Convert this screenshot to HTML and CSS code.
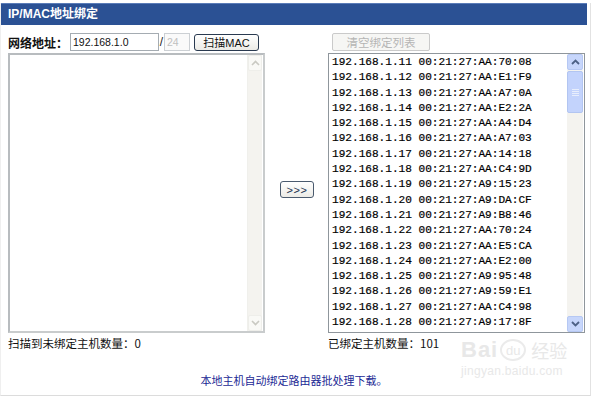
FILE: index.html
```html
<!DOCTYPE html>
<html lang="zh-CN">
<head>
<meta charset="utf-8">
<title>IP/MAC地址绑定</title>
<link rel="stylesheet" href="styles.css">
</head>
<body>
<div class="panel">
  <div class="titlebar">IP/MAC地址绑定</div>
  <div class="main">
    <div class="col">
      <div class="toolbar">
        <span class="label">网络地址：</span>
        <span class="input ip">192.168.1.0</span>
        <span class="slash">/</span>
        <span class="input mask">24</span>
        <span class="btn scan">扫描MAC</span>
      </div>
      <div class="listbox pale">
        <div class="items"></div>
        <div class="sb sb-off">
          <div class="sb-btn"><svg width="9" height="6" viewBox="0 0 9 6"><path d="M1 5 L4.5 1.5 L8 5" fill="none" stroke="#c9c9c2" stroke-width="1.6"/></svg></div>
          <div class="sb-track"></div>
          <div class="sb-btn"><svg width="9" height="6" viewBox="0 0 9 6"><path d="M1 1 L4.5 4.5 L8 1" fill="none" stroke="#c9c9c2" stroke-width="1.6"/></svg></div>
        </div>
      </div>
      <div class="count">扫描到未绑定主机数量：0</div>
    </div>
    <div class="mid"><span class="btn move">&gt;&gt;&gt;</span></div>
    <div class="col">
      <div class="toolbar"><span class="btn clear">清空绑定列表</span></div>
      <div class="listbox">
        <div class="items mono">
          <div>192.168.1.11 00:21:27:AA:70:08</div>
          <div>192.168.1.12 00:21:27:AA:E1:F9</div>
          <div>192.168.1.13 00:21:27:AA:A7:0A</div>
          <div>192.168.1.14 00:21:27:AA:E2:2A</div>
          <div>192.168.1.15 00:21:27:AA:A4:D4</div>
          <div>192.168.1.16 00:21:27:AA:A7:03</div>
          <div>192.168.1.17 00:21:27:AA:14:18</div>
          <div>192.168.1.18 00:21:27:AA:C4:9D</div>
          <div>192.168.1.19 00:21:27:A9:15:23</div>
          <div>192.168.1.20 00:21:27:A9:DA:CF</div>
          <div>192.168.1.21 00:21:27:A9:B8:46</div>
          <div>192.168.1.22 00:21:27:AA:70:24</div>
          <div>192.168.1.23 00:21:27:AA:E5:CA</div>
          <div>192.168.1.24 00:21:27:AA:E2:00</div>
          <div>192.168.1.25 00:21:27:A9:95:48</div>
          <div>192.168.1.26 00:21:27:A9:59:E1</div>
          <div>192.168.1.27 00:21:27:AA:C4:98</div>
          <div>192.168.1.28 00:21:27:A9:17:8F</div>
        </div>
        <div class="sb">
          <div class="sb-btn on"><svg width="9" height="6" viewBox="0 0 9 6"><path d="M1 5 L4.5 1.5 L8 5" fill="none" stroke="#4d6185" stroke-width="1.8"/></svg></div>
          <div class="sb-thumb"><span></span><span></span><span></span><span></span></div>
          <div class="sb-track"></div>
          <div class="sb-btn on"><svg width="9" height="6" viewBox="0 0 9 6"><path d="M1 1 L4.5 4.5 L8 1" fill="none" stroke="#4d6185" stroke-width="1.8"/></svg></div>
        </div>
      </div>
      <div class="count">已绑定主机数量：101</div>
    </div>
  </div>
  <div class="footer">本地主机自动绑定路由器批处理下载。</div>
  <div class="watermark">
    <div class="wm-top"><span class="wm-bai">Bai</span><span class="wm-du">du</span><span class="wm-jy">经验</span></div>
    <div class="wm-url">jingyan.baidu.com</div>
  </div>
</div>
</body>
</html>
```
FILE: styles.css
```css
* { box-sizing: border-box; }
html, body { margin: 0; padding: 0; background: #fff; }
body {
  font-family: "Liberation Sans", "Noto Sans CJK SC", sans-serif;
  font-size: 12px;
  color: #1a1a1a;
}
.panel {
  position: relative;
  width: 591px;
  height: 393px;
  margin-top: 3px;
  border-right: 1px solid #e2e2e2;
  border-bottom: 1px solid #dcdcdc;
  border-left: 1px solid #efefef;
  display: flex;
  flex-direction: column;
}
.titlebar {
  width: 586px;
  height: 22px;
  background: #2b5194;
  border-top: 1px solid #5a7cb8;
  color: #fff;
  font-weight: bold;
  font-size: 12px;
  line-height: 21px;
  padding-left: 7px;
  font-family: "Liberation Sans", "Noto Sans CJK SC", sans-serif;
}
.main {
  display: flex;
  padding: 8px 0 0 7px;
}
.col {
  width: 257px;
  display: flex;
  flex-direction: column;
}
.mid {
  width: 63px;
  display: flex;
  align-items: center;
  justify-content: center;
  padding-bottom: 4px;
  padding-left: 1px;
}
.toolbar {
  height: 18px;
  margin-bottom: 2px;
  display: flex;
  align-items: center;
}
.label {
  font-weight: bold;
  font-size: 12px;
  width: 62px;
  font-family: "Noto Sans CJK SC", sans-serif;
  color: #111;
}
.input {
  height: 18px;
  border: 1px solid #a5acb2;
  font-family: "Liberation Sans", sans-serif;
  font-size: 10.5px;
  line-height: 16px;
  padding-left: 2px;
  color: #111;
  background: #fff;
}
.ip { width: 89px; }
.slash { width: 5px; text-align: center; font-size: 12px; color: #222; }
.mask { width: 26px; color: #c0c0c0; border-color: #ccd0d4; background: #fafafa; }
.btn {
  display: inline-flex;
  align-items: center;
  justify-content: center;
  border: 1px solid #2a3a50;
  border-radius: 3px;
  background: linear-gradient(#ffffff, #ecebe6);
  font-size: 11px;
  color: #111;
  font-family: "Noto Sans CJK SC", sans-serif;
}
.scan {
  margin-left: 4px;
  width: 65px;
  height: 17px;
  font-family: "Liberation Sans", "Noto Sans CJK SC", sans-serif;
}
.move {
  width: 34px;
  height: 17px;
  border-color: #4a5a6e;
  font-family: "Liberation Sans", sans-serif;
  font-size: 11px;
  letter-spacing: 0.5px;
  color: #1e3050;
}
.clear {
  margin-left: 4px;
  width: 98px;
  height: 18px;
  border-color: #cacaca;
  border-radius: 2px;
  color: #b5b5b5;
  background: #f6f6f4;
  font-size: 11.5px;
}
.listbox {
  height: 280px;
  border: 1px solid #8f969c;
  display: flex;
  background: #fff;
}
.listbox.pale { border: 2px solid #b8bcbf; border-right-color: #c9cccd; border-bottom-color: #c9cccd; }
.items {
  flex: 1;
  overflow: hidden;
}
.mono {
  font-family: "Liberation Mono", monospace;
  font-size: 11.1px;
  line-height: 15.3px;
  padding: 1px 0 0 3px;
  color: #000;
  -webkit-text-stroke: 0.2px #000;
}
.sb {
  width: 16px;
  margin: 0 1px 0 0;
  display: flex;
  flex-direction: column;
  background: #f4f3ef;
}
.sb-btn {
  height: 16px;
  display: flex;
  align-items: center;
  justify-content: center;
  border: 1px solid #eeeeea;
  border-radius: 2px;
  background: #f9f9f6;
}
.sb-btn.on {
  background: #c7d6fb;
  border-color: #b6c8f3;
}
.sb-track { flex: 1; }
.sb-off { width: 15px; border-left: 1px solid #f0f0ec; }
.sb-thumb {
  height: 42px;
  margin-top: 1px;
  background: #c3d3fc;
  border: 1px solid #b2c5f1;
  border-radius: 2px;
  display: flex;
  flex-direction: column;
  align-items: center;
  justify-content: center;
  gap: 1px;
}
.sb-thumb span { width: 7px; height: 1px; background: #e8eefc; }
.count {
  margin-top: 3px;
  line-height: 14px;
  font-size: 11.5px;
  font-family: "Noto Sans CJK SC", sans-serif;
  color: #111;
}
.footer {
  margin-top: 23px;
  width: 586px;
  text-align: center;
  font-size: 11px;
  line-height: 14px;
  color: #1c2a95;
  font-family: "Noto Sans CJK SC", sans-serif;
}
.watermark {
  position: absolute;
  left: 460px;
  top: 334px;
  color: #e8e8e8;
  pointer-events: none;
}
.wm-top { display: flex; align-items: center; gap: 2px; }
.wm-bai { font-family: "Liberation Sans", sans-serif; font-size: 22px; font-weight: bold; letter-spacing: 1px; }
.wm-du {
  font-family: "Liberation Sans", sans-serif;
  font-size: 13px;
  border: 2px solid #ebebeb;
  border-radius: 50%;
  width: 26px;
  height: 22px;
  display: inline-flex;
  align-items: center;
  justify-content: center;
}
.wm-jy { font-family: "Noto Sans CJK SC", sans-serif; font-size: 18px; margin-left: 3px; }
.wm-url { font-family: "Liberation Sans", sans-serif; font-size: 12px; margin-top: 1px; letter-spacing: 0.3px; }
```
